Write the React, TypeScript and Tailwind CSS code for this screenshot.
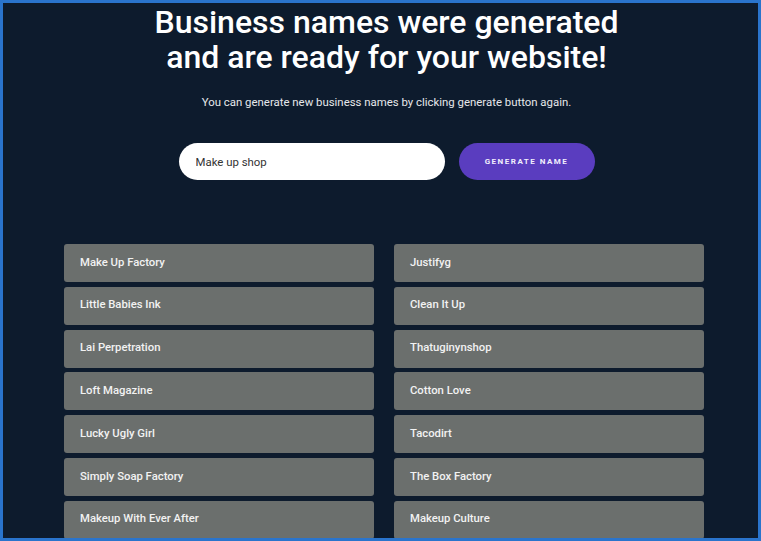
import { useState } from 'react';

const names = [
  'Make Up Factory',
  'Justifyg',
  'Little Babies Ink',
  'Clean It Up',
  'Lai Perpetration',
  'Thatuginynshop',
  'Loft Magazine',
  'Cotton Love',
  'Lucky Ugly Girl',
  'Tacodirt',
  'Simply Soap Factory',
  'The Box Factory',
  'Makeup With Ever After',
  'Makeup Culture',
];

export default function App() {
  const [query, setQuery] = useState('Make up shop');

  return (
    <main className="w-[761px] h-[541px] overflow-hidden border-[3px] border-[#2a74cc] bg-[#0d1b2d] text-white font-['Roboto',sans-serif]">
      <div className="pl-[12px]">
        <h1 className="pt-[2px] text-center text-[32px] leading-[35px] font-medium">
          Business names were generated
          <br />
          and are ready for your website!
        </h1>
        <p className="mt-[19px] text-center text-[11.4px] leading-[16px] text-[#e6e8eb]">
          You can generate new business names by clicking generate button again.
        </p>

        {/* Search form */}
        <div className="mt-[33px] flex justify-center items-center gap-[14px]">
          <input
            className="w-[266px] h-[37px] rounded-full bg-white px-[17px] text-[11.4px] text-[#333] outline-none"
            value={query}
            onChange={(e) => setQuery(e.target.value)}
          />
          <button className="w-[136px] h-[37px] rounded-full bg-[#5a3dbf] text-[8px] font-bold tracking-[1.5px] text-[#f1eefc] uppercase">
            Generate Name
          </button>
        </div>
      </div>

      {/* Generated names */}
      <div className="mt-[64px] ml-[61px] w-[640px] grid grid-cols-2 gap-x-[20px] gap-y-[4.8px]">
        {names.map((name) => (
          <div
            key={name}
            className="h-[38px] flex items-center rounded-[3px] bg-[#6b6f6d] px-[16px] text-[11.3px] font-medium text-[#f2f2f2]"
          >
            {name}
          </div>
        ))}
      </div>
    </main>
  );
}
